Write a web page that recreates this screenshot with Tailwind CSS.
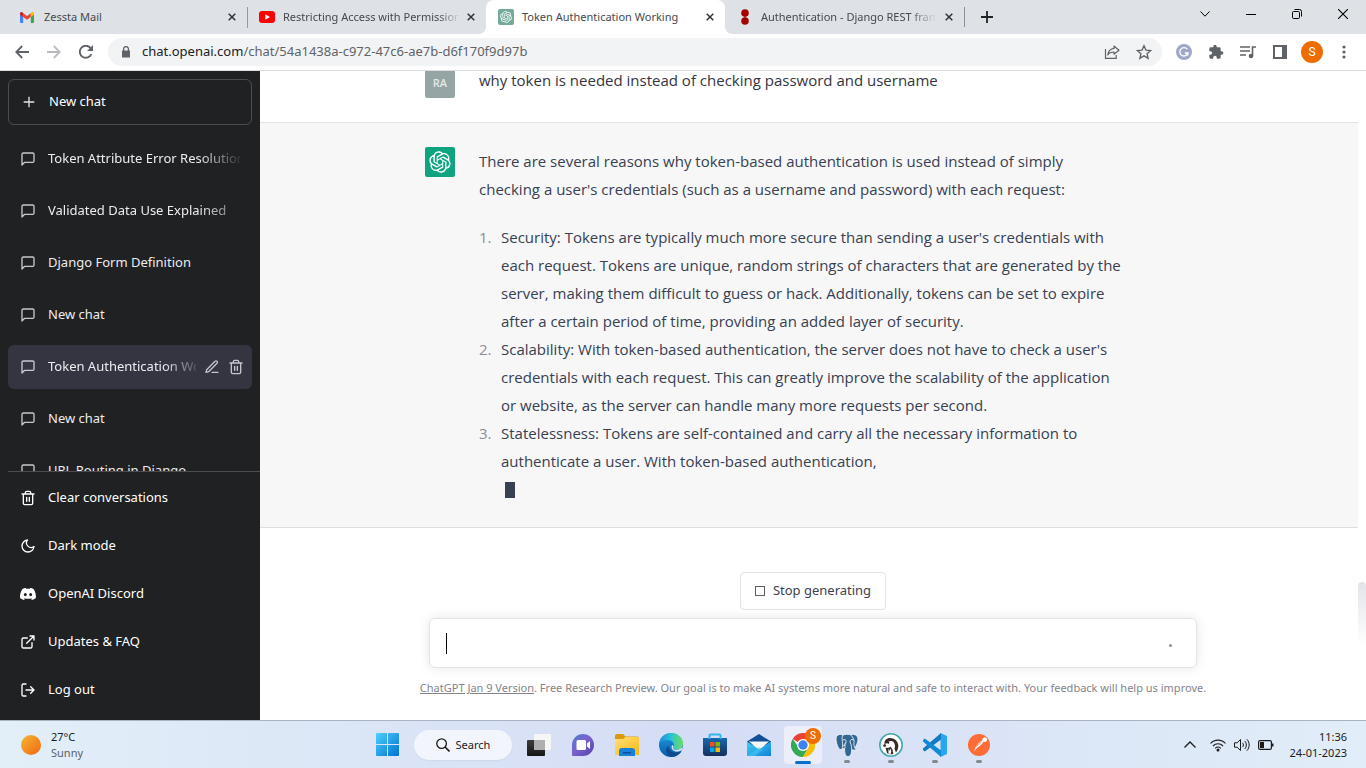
<!DOCTYPE html>
<html lang="en">
<head>
<meta charset="utf-8">
<title>Token Authentication Working</title>
<script src="https://cdn.jsdelivr.net/npm/@tailwindcss/browser@4"></script>
</head>
<body class="flex h-screen flex-col overflow-hidden bg-white font-['Noto_Sans',sans-serif] text-[13px]">
<svg class="absolute size-0" aria-hidden="true">
  <defs>
    <symbol id="openai" viewBox="0 0 41 41"><path fill="currentColor" d="M37.5324 16.8707C37.9808 15.5241 38.1363 14.0974 37.9886 12.6859C37.8409 11.2744 37.3934 9.91076 36.676 8.68622C35.6126 6.83404 33.9882 5.3676 32.0373 4.4985C30.0864 3.62941 27.9098 3.40259 25.8215 3.85078C24.8796 2.7893 23.7219 1.94125 22.4257 1.36341C21.1295 0.785575 19.7249 0.491269 18.3058 0.500197C16.1708 0.495044 14.0893 1.16803 12.3614 2.42214C10.6335 3.67624 9.34853 5.44666 8.6917 7.47815C7.30085 7.76286 5.98686 8.3414 4.8377 9.17505C3.68854 10.0087 2.73073 11.0782 2.02839 12.312C0.956464 14.1591 0.498905 16.2988 0.721698 18.4228C0.944492 20.5467 1.83612 22.5449 3.268 24.1293C2.81966 25.4759 2.66413 26.9026 2.81182 28.3141C2.95951 29.7256 3.40701 31.0892 4.12437 32.3138C5.18791 34.1659 6.8123 35.6322 8.76321 36.5013C10.7141 37.3704 12.8907 37.5973 14.9789 37.1492C15.9208 38.2107 17.0786 39.0587 18.3747 39.6366C19.6709 40.2144 21.0755 40.5087 22.4946 40.4998C24.6307 40.5054 26.7133 39.8321 28.4418 38.5772C30.1704 37.3223 31.4556 35.5506 32.1119 33.5179C33.5027 33.2332 34.8167 32.6547 35.9659 31.821C37.115 30.9874 38.0728 29.9178 38.7752 28.684C39.8458 26.8371 40.3023 24.6979 40.0789 22.5748C39.8556 20.4517 38.9639 18.4544 37.5324 16.8707ZM22.4978 37.8849C20.7443 37.8874 19.0459 37.2733 17.6994 36.1501C17.7601 36.117 17.8666 36.0586 17.936 36.0161L25.9004 31.4156C26.1003 31.3019 26.2663 31.137 26.3813 30.9378C26.4964 30.7386 26.5563 30.5124 26.5549 30.2825V19.0542L29.9213 20.998C29.9389 21.0068 29.9541 21.0198 29.9656 21.0359C29.977 21.052 29.9842 21.0707 29.9867 21.0902V30.3889C29.9842 32.375 29.1946 34.2791 27.7909 35.6841C26.3872 37.0892 24.4838 37.8806 22.4978 37.8849ZM6.39227 31.0064C5.51397 29.4888 5.19742 27.7107 5.49804 25.9832C5.55718 26.0187 5.66048 26.0818 5.73461 26.1244L13.699 30.7248C13.8975 30.8408 14.1233 30.902 14.3532 30.902C14.583 30.902 14.8088 30.8408 15.0073 30.7248L24.731 25.1103V28.9979C24.7321 29.0177 24.7283 29.0376 24.7199 29.0556C24.7115 29.0736 24.6988 29.0893 24.6829 29.1012L16.6317 33.7497C14.9096 34.7416 12.8643 35.0097 10.9447 34.4954C9.02506 33.9811 7.38785 32.7263 6.39227 31.0064ZM4.29707 13.6194C5.17156 12.0998 6.55279 10.9364 8.19885 10.3327C8.19885 10.4013 8.19491 10.5228 8.19491 10.6071V19.808C8.19351 20.0378 8.25334 20.2638 8.36823 20.4629C8.48312 20.6619 8.64893 20.8267 8.84863 20.9404L18.5723 26.5542L15.206 28.4979C15.1894 28.5089 15.1703 28.5155 15.1505 28.5173C15.1307 28.5191 15.1107 28.516 15.0924 28.5082L7.04046 23.8557C5.32135 22.8601 4.06716 21.2235 3.55289 19.3046C3.03862 17.3858 3.30624 15.3413 4.29707 13.6194ZM31.955 20.0556L22.2312 14.4411L25.5976 12.4981C25.6142 12.4872 25.6333 12.4805 25.6531 12.4787C25.6729 12.4769 25.6928 12.4801 25.7111 12.4879L33.7631 17.1364C34.9967 17.849 36.0017 18.8982 36.6606 20.1613C37.3194 21.4244 37.6047 22.849 37.4832 24.2684C37.3617 25.6878 36.8382 27.0432 35.9743 28.1759C35.1103 29.3086 33.9415 30.1717 32.6047 30.6641C32.6047 30.5947 32.6047 30.4733 32.6047 30.3889V21.188C32.6066 20.9586 32.5474 20.7328 32.4332 20.5338C32.319 20.3348 32.154 20.1698 31.955 20.0556ZM35.3055 15.0128C35.2464 14.9765 35.1431 14.9142 35.069 14.8717L27.1045 10.2712C26.906 10.1554 26.6803 10.0943 26.4504 10.0943C26.2206 10.0943 25.9948 10.1554 25.7963 10.2712L16.0726 15.8858V11.9982C16.0715 11.9783 16.0753 11.9585 16.0837 11.9405C16.0921 11.9225 16.1048 11.9068 16.1207 11.8949L24.1719 7.25025C25.4053 6.53903 26.8158 6.19376 28.2383 6.25482C29.6608 6.31589 31.0364 6.78077 32.2044 7.59508C33.3723 8.40939 34.2842 9.53945 34.8334 10.8531C35.3826 12.1667 35.5464 13.6095 35.3055 15.0128ZM14.2424 21.9419L10.8752 19.9981C10.8576 19.9893 10.8423 19.9763 10.8309 19.9602C10.8195 19.9441 10.8122 19.9254 10.8098 19.9058V10.6071C10.8107 9.18295 11.2173 7.78848 11.9819 6.58696C12.7466 5.38544 13.8377 4.42659 15.1275 3.82264C16.4173 3.21869 17.8524 2.99464 19.2649 3.1767C20.6775 3.35876 22.0089 3.93941 23.1034 4.85067C23.0427 4.88379 22.937 4.94215 22.8668 4.98473L14.9024 9.58517C14.7025 9.69878 14.5366 9.86356 14.4215 10.0626C14.3065 10.2616 14.2466 10.4877 14.2479 10.7175L14.2424 21.9419ZM16.071 17.9991L20.4018 15.4978L24.7325 17.9975V22.9985L20.4018 25.4983L16.071 22.9985V17.9991Z"/></symbol>
    <symbol id="x" viewBox="0 0 8 8"><path d="M.7.7l6.600 6.600M7.300.7L.7 7.300" stroke="currentColor" stroke-width="1.500" fill="none"/></symbol>
    <symbol id="chat" viewBox="0 0 24 24"><path d="M21 15a2 2 0 0 1-2 2H7l-4 4V5a2 2 0 0 1 2-2h14a2 2 0 0 1 2 2z" fill="none" stroke="currentColor" stroke-width="2" stroke-linecap="round" stroke-linejoin="round"/></symbol>
    <symbol id="trash" viewBox="0 0 24 24"><path d="M3 6h18M19 6v14a2 2 0 0 1-2 2H7a2 2 0 0 1-2-2V6m3 0V4a2 2 0 0 1 2-2h4a2 2 0 0 1 2 2v2M10 11v6M14 11v6" fill="none" stroke="currentColor" stroke-width="2" stroke-linecap="round" stroke-linejoin="round"/></symbol>
    <linearGradient id="win" x1="0" y1="0" x2="1" y2="1"><stop offset="0" stop-color="#4fd0fb"/><stop offset="1" stop-color="#0072d2"/></linearGradient>
    <linearGradient id="dark" x1="0" y1="0" x2="0" y2="1"><stop offset="0" stop-color="#3c3c3c"/><stop offset="1" stop-color="#161616"/></linearGradient>
    <linearGradient id="teams" x1="0" y1="0" x2="1" y2="1"><stop offset="0" stop-color="#4f7fd0"/><stop offset=".45" stop-color="#7a62cc"/><stop offset="1" stop-color="#5243a8"/></linearGradient>
    <linearGradient id="folder" x1="0" y1="0" x2="1" y2="1"><stop offset="0" stop-color="#ffe07a"/><stop offset="1" stop-color="#fbb811"/></linearGradient>
    <linearGradient id="edgeA" x1="0" y1="0" x2="1" y2="0"><stop offset="0" stop-color="#1b8bdc"/><stop offset=".5" stop-color="#2bc3d6"/><stop offset="1" stop-color="#6be05a"/></linearGradient>
    <linearGradient id="edgeB" x1="0" y1="0" x2="0" y2="1"><stop offset="0" stop-color="#1a9ee6"/><stop offset="1" stop-color="#0c59a4"/></linearGradient>
    <linearGradient id="store" x1="0" y1="0" x2="0" y2="1"><stop offset="0" stop-color="#1668b0"/><stop offset="1" stop-color="#162f5c"/></linearGradient>
    <linearGradient id="mail" x1="0" y1="0" x2="1" y2="1"><stop offset="0" stop-color="#3fd0f5"/><stop offset="1" stop-color="#1380d8"/></linearGradient>
  </defs>
</svg>

<!-- Tab strip -->
<header class="flex h-[34px] shrink-0 justify-between bg-[#dee1e6] text-[#45494d]">
  <div class="flex min-w-0 pl-2 text-[11px]" role="tablist">
    <div role="tab" class="flex w-[239px] items-center pr-[11px] pl-3">
      <svg class="mr-2.5 h-[11px] w-[14px] shrink-0" viewBox="0 0 14 11"><path fill="#4285f4" d="M0 2v8a1 1 0 0 0 1 1h2.200V4.500z"/><path fill="#34a853" d="M14 2v8a1 1 0 0 1-1 1h-2.200V4.500z"/><path fill="#ea4335" d="M3.200 1.200L7 4l3.800-2.800v3.800L7 7.800 3.200 5z"/><path fill="#c5221f" d="M0 1.600C0 .2 1.500-.3 2.500.5l.7.7V5L0 2.700z"/><path fill="#fbbc04" d="M14 1.600c0-1.400-1.500-1.900-2.500-1.100l-.7.7V5L14 2.700z"/></svg>
      <span class="flex-1 truncate">Zessta Mail</span>
      <button aria-label="Close tab"><svg class="size-2 text-[#303336]"><use href="#x"/></svg></button>
    </div>
    <div role="tab" class="flex w-[239px] items-center border-l border-[#a4a7ab] pr-[11px] pl-[11px] [border-image:linear-gradient(to_bottom,transparent_8px,#96999d_8px,#96999d_27px,transparent_27px)_1]">
      <svg class="mr-2 h-[12px] w-4 shrink-0" viewBox="0 0 16 12"><rect width="16" height="12" rx="3" fill="#f00"/><path d="M6.300 3.300v5.400L11 6z" fill="#fff"/></svg>
      <span class="min-w-0 flex-1 overflow-hidden whitespace-nowrap [mask-image:linear-gradient(to_right,#000_155px,transparent_177px)]">Restricting Access with Permissions</span>
      <button class="ml-2" aria-label="Close tab"><svg class="size-2 text-[#303336]"><use href="#x"/></svg></button>
    </div>
    <div role="tab" aria-selected="true" class="relative flex w-[239px] items-center rounded-t-lg bg-white pr-[11px] pl-3">
      <span class="absolute bottom-0 -left-2 size-2 bg-[radial-gradient(circle_at_0_0,transparent_8px,white_8px)]"></span>
      <span class="absolute -right-2 bottom-0 size-2 bg-[radial-gradient(circle_at_100%_0,transparent_8px,white_8px)]"></span>
      <span class="mr-2 flex size-4 shrink-0 items-center justify-center rounded-xs bg-[#74aa9c] text-white"><svg class="size-3"><use href="#openai"/></svg></span>
      <span class="flex-1 truncate">Token Authentication Working</span>
      <button aria-label="Close tab"><svg class="size-2 text-[#303336]"><use href="#x"/></svg></button>
    </div>
    <div role="tab" class="flex w-[239px] items-center pr-[11px] pl-3">
      <svg class="mr-2 size-4 shrink-0" viewBox="0 0 16 16"><path d="M7 4h2v8H7z" fill="#cf6a6a"/><circle cx="8" cy="4" r="3.800" fill="#a30000"/><circle cx="8" cy="12" r="3.800" fill="#a30000"/></svg>
      <span class="min-w-0 flex-1 overflow-hidden whitespace-nowrap [mask-image:linear-gradient(to_right,#000_148px,transparent_175px)]">Authentication - Django REST framework</span>
      <button class="ml-2" aria-label="Close tab"><svg class="size-2 text-[#303336]"><use href="#x"/></svg></button>
    </div>
    <div class="flex items-center"><span class="h-5 w-px bg-[#8f9296]"></span>
      <button class="ml-4" aria-label="New tab"><svg class="size-3 text-[#202326]" viewBox="0 0 12 12"><path d="M6 0v12M0 6h12" stroke="currentColor" stroke-width="1.800"/></svg></button></div>
  </div>
  <div class="flex h-7 text-black">
    <button class="flex w-[46px] items-center justify-center" aria-label="Search tabs"><svg class="h-1.5 w-2.5" viewBox="0 0 10 6"><path d="M.5.5L5 5.200 9.500.5" fill="none" stroke="currentColor"/></svg></button>
    <button class="flex w-[46px] items-center justify-center" aria-label="Minimise"><svg class="h-px w-2.5"><rect width="10" height="1"/></svg></button>
    <button class="flex w-[46px] items-center justify-center" aria-label="Restore"><svg class="size-2.5" viewBox="0 0 10 10"><rect x=".5" y="2.500" width="7" height="7" rx="1.200" fill="none" stroke="currentColor"/><path d="M2.500.5H7.500a2 2 0 0 1 2 2v5" fill="none" stroke="currentColor"/></svg></button>
    <button class="flex w-[46px] items-center justify-center" aria-label="Close"><svg class="size-2.5" viewBox="0 0 10 10"><path d="M0 0l10 10M10 0L0 10" stroke="currentColor" stroke-width="1.100"/></svg></button>
  </div>
</header>

<!-- Address bar -->
<nav class="flex h-[37px] shrink-0 items-center gap-1.5 border-b border-[#dadce0] bg-white px-1.5 text-[#5f6368]">
  <div class="flex">
    <button class="flex w-8 justify-center" aria-label="Back"><svg class="size-3.5" viewBox="0 0 14 14"><path d="M14 7H1.500M7.200 1L1.300 7l5.900 6" fill="none" stroke="currentColor" stroke-width="1.800"/></svg></button>
    <button class="flex w-8 justify-center text-[#b9bbbe]" aria-label="Forward"><svg class="size-3.5" viewBox="0 0 14 14"><path d="M0 7h12.500M6.800 1l5.900 6-5.900 6" fill="none" stroke="currentColor" stroke-width="1.800"/></svg></button>
    <button class="flex w-8 justify-center" aria-label="Reload"><svg class="size-3.5" viewBox="0 0 14 14"><path d="M12.400 9A6 6 0 1 1 11.300 2.800L12.600 4.200" fill="none" stroke="currentColor" stroke-width="1.900"/><path d="M14 0v6H8z" fill="currentColor"/></svg></button>
  </div>
  <div class="flex h-7 min-w-0 flex-1 items-center rounded-full bg-[#f1f3f4] pr-0.5 pl-3.5">
    <svg class="mr-3 h-3 w-2 shrink-0" viewBox="0 0 8 12"><path d="M0 4.500h8V11.500H0z" fill="currentColor"/><path d="M1.600 5V3a2.400 2.400 0 0 1 4.800 0v2" fill="none" stroke="currentColor" stroke-width="1.300"/></svg>
    <a href="#" class="flex-1 truncate"><span class="text-[#202124]">chat.openai.com</span>/chat/54a1438a-c972-47c6-ae7b-d6f170f9d97b</a>
    <button class="flex w-8 justify-center" aria-label="Share"><svg class="h-3.5 w-4" viewBox="0 0 16 14"><path d="M1.500 4v9.300h10.700V10" fill="none" stroke="currentColor" stroke-width="1.200"/><path d="M10 1l5 4.200-5 4V7C7 7 5 8 3.800 10 4.200 6.500 6.500 3.800 10 3.400z" fill="none" stroke="currentColor" stroke-width="1.200" stroke-linejoin="round"/></svg></button>
    <button class="flex w-8 justify-center" aria-label="Bookmark"><svg class="size-4" viewBox="0 0 24 24"><path d="M12 2.500l2.900 6.600 7.100.7-5.400 4.700 1.600 7-6.200-3.700-6.200 3.700 1.600-7L2 9.800l7.100-.7z" fill="none" stroke="currentColor" stroke-width="2"/></svg></button>
  </div>
  <div class="flex items-center">
    <button class="flex w-8 justify-center" aria-label="Grammarly"><svg class="size-4" viewBox="0 0 16 16"><circle cx="8" cy="8" r="8" fill="#a0a7c8"/><path d="M11.300 5.200A4.200 4.200 0 1 0 12 9H8.800M12 9l-.4 2.600" fill="none" stroke="#fff" stroke-width="1.300"/></svg></button>
    <button class="flex w-8 justify-center" aria-label="Extensions"><svg class="size-4" viewBox="0 0 24 24"><path fill="currentColor" d="M20.500 11H19V7a2 2 0 0 0-2-2h-4V3.500a2.500 2.500 0 0 0-5 0V5H4a2 2 0 0 0-2 2v3.800h1.500a2.700 2.700 0 0 1 0 5.400H2V20a2 2 0 0 0 2 2h3.800v-1.500a2.700 2.700 0 0 1 5.400 0V22H17a2 2 0 0 0 2-2v-4h1.500a2.500 2.500 0 0 0 0-5z"/></svg></button>
    <button class="flex w-8 justify-center" aria-label="Media controls"><svg class="h-3.5 w-4" viewBox="0 0 16 14"><path d="M0 2h10M0 6h10M0 10h6M12.500 11V2H16" fill="none" stroke="currentColor" stroke-width="1.600"/><circle cx="11" cy="11" r="2.300" fill="currentColor"/></svg></button>
    <button class="flex w-8 justify-center" aria-label="Side panel"><svg class="size-3.5" viewBox="0 0 14 14"><path d="M1 1h12v12H1z" fill="none" stroke="currentColor" stroke-width="2"/><path d="M9 0h5v14H9z" fill="currentColor"/></svg></button>
    <button class="flex w-8 justify-center" aria-label="Profile"><span class="flex size-[22px] items-center justify-center rounded-full bg-[#ef6c00] font-['Roboto'] text-[12px] text-white">S</span></button>
    <button class="flex w-8 justify-center" aria-label="Menu"><svg class="h-3.5 w-1" viewBox="0 0 4 14"><circle cx="2" cy="2" r="1.600" fill="currentColor"/><circle cx="2" cy="7" r="1.600" fill="currentColor"/><circle cx="2" cy="12" r="1.600" fill="currentColor"/></svg></button>
  </div>
</nav>

<div class="flex min-h-0 flex-1">
  <!-- Sidebar -->
  <aside class="flex w-[260px] shrink-0 flex-col bg-[#202123] p-2 pr-0 text-white">
    <button class="mr-2 flex h-[46px] shrink-0 items-center gap-3 rounded-md border border-[#4d4d4f] px-3"><svg class="size-4" viewBox="0 0 24 24"><path d="M12 4v16M4 12h16" stroke="#e2e2e2" stroke-width="2"/></svg>New chat</button>
    <div class="mt-3 flex min-h-0 flex-1 flex-col gap-2 overflow-hidden border-b border-[#4d4d4f] pr-2 text-[#ececf1]">
      <a href="#" class="flex h-11 shrink-0 items-center gap-3 rounded-md px-3"><svg class="size-4 shrink-0 text-[#c9c9cd]"><use href="#chat"/></svg><span class="flex-1 overflow-hidden whitespace-nowrap [mask-image:linear-gradient(to_right,#000_150px,transparent_196px)]">Token Attribute Error Resolution</span></a>
      <a href="#" class="flex h-11 shrink-0 items-center gap-3 rounded-md px-3"><svg class="size-4 shrink-0 text-[#c9c9cd]"><use href="#chat"/></svg><span class="flex-1 overflow-hidden whitespace-nowrap [mask-image:linear-gradient(to_right,#000_150px,transparent_210px)]">Validated Data Use Explained</span></a>
      <a href="#" class="flex h-11 shrink-0 items-center gap-3 rounded-md px-3"><svg class="size-4 shrink-0 text-[#c9c9cd]"><use href="#chat"/></svg>Django Form Definition</a>
      <a href="#" class="flex h-11 shrink-0 items-center gap-3 rounded-md px-3"><svg class="size-4 shrink-0 text-[#c9c9cd]"><use href="#chat"/></svg>New chat</a>
      <div class="flex h-11 shrink-0 items-center rounded-md bg-[#343541] pr-2 pl-3">
        <a href="#" class="flex min-w-0 flex-1 items-center gap-3"><svg class="size-4 shrink-0 text-[#c9c9cd]"><use href="#chat"/></svg><span class="flex-1 overflow-hidden whitespace-nowrap [mask-image:linear-gradient(to_right,#000_115px,transparent_155px)]">Token Authentication Working</span></a>
        <button class="ml-2 text-[#c5c5d2]" aria-label="Rename"><svg class="size-4" viewBox="0 0 24 24"><path d="M12 20h9M16.500 3.500a2.100 2.100 0 0 1 3 3L7 19l-4 1 1-4z" fill="none" stroke="currentColor" stroke-width="2" stroke-linecap="round" stroke-linejoin="round"/></svg></button>
        <button class="ml-2 text-[#c5c5d2]" aria-label="Delete"><svg class="size-4"><use href="#trash"/></svg></button>
      </div>
      <a href="#" class="flex h-11 shrink-0 items-center gap-3 rounded-md px-3"><svg class="size-4 shrink-0 text-[#c9c9cd]"><use href="#chat"/></svg>New chat</a>
      <a href="#" class="flex h-11 shrink-0 items-center gap-3 rounded-md px-3"><svg class="size-4 shrink-0 text-[#c9c9cd]"><use href="#chat"/></svg>URL Routing in Django</a>
    </div>
    <div class="flex flex-col gap-1 pt-1">
      <button class="flex h-11 items-center gap-3 px-3"><svg class="size-4"><use href="#trash"/></svg>Clear conversations</button>
      <button class="flex h-11 items-center gap-3 px-3"><svg class="size-4" viewBox="0 0 24 24"><path d="M21 12.800A9 9 0 1 1 11.200 3 7 7 0 0 0 21 12.800z" fill="none" stroke="currentColor" stroke-width="2" stroke-linejoin="round"/></svg>Dark mode</button>
      <a href="#" class="flex h-11 items-center gap-3 px-3"><svg class="size-4" viewBox="0 0 24 24"><path fill="currentColor" fill-rule="evenodd" d="M20.300 4.400A19.800 19.800 0 0 0 15.400 3l-.6 1.200a18.300 18.300 0 0 0-5.600 0L8.600 3a19.700 19.700 0 0 0-4.900 1.400C.5 9-.3 13.600.1 18.100a19.900 19.900 0 0 0 6 3l1.300-2-1.900-.9.400-.3c3.900 1.800 8.200 1.800 12.100 0l.4.300-1.900.9 1.300 2a19.800 19.800 0 0 0 6-3c.5-5.200-.8-9.700-3.500-13.700zM8 15.300c-1.200 0-2.200-1.100-2.200-2.400S6.800 10.500 8 10.500s2.200 1.100 2.200 2.400S9.200 15.300 8 15.300zm8 0c-1.200 0-2.200-1.100-2.200-2.400s1-2.400 2.200-2.400 2.200 1.100 2.200 2.400-1 2.400-2.200 2.400z"/></svg>OpenAI Discord</a>
      <a href="#" class="flex h-11 items-center gap-3 px-3"><svg class="size-4" viewBox="0 0 24 24"><path d="M18 13v6a2 2 0 0 1-2 2H5a2 2 0 0 1-2-2V8a2 2 0 0 1 2-2h6M15 3h6v6M10 14L21 3" fill="none" stroke="currentColor" stroke-width="2" stroke-linecap="round" stroke-linejoin="round"/></svg>Updates &amp; FAQ</a>
      <button class="flex h-11 items-center gap-3 px-3"><svg class="size-4" viewBox="0 0 24 24"><path d="M9 21H5a2 2 0 0 1-2-2V5a2 2 0 0 1 2-2h4M16 17l5-5-5-5M21 12H9" fill="none" stroke="currentColor" stroke-width="2" stroke-linecap="round" stroke-linejoin="round"/></svg>Log out</button>
    </div>
  </aside>

  <!-- Conversation -->
  <main class="relative flex min-w-0 flex-1 flex-col justify-between">
    <div class="mr-2 font-['Open_Sans',sans-serif] text-[15px] leading-7 text-[#374151]">
      <section class="flex h-[52px] items-end justify-center overflow-hidden border-b border-[#e3e3e3] pb-6 text-[#343541]">
        <div class="flex h-8 w-full max-w-3xl gap-6">
          <div class="flex size-[30px] shrink-0 items-center justify-center self-end rounded-xs bg-[#95a5a6] text-[11px] font-semibold text-[#e3e8e8]">RA</div>
          <p>why token is needed instead of checking password and username</p>
        </div>
      </section>
      <section class="flex justify-center border-b border-[#dedede] bg-[#f7f7f8] py-6">
        <div class="flex w-full max-w-3xl gap-6">
          <div class="flex size-[30px] shrink-0 items-center justify-center rounded-xs bg-[#10a37f] text-white"><svg class="size-[22px]"><use href="#openai"/></svg></div>
          <div class="max-w-[645px]">
            <p class="mb-5">There are several reasons why token-based authentication is used instead of simply checking a user's credentials (such as a username and password) with each request:</p>
            <ol>
              <li class="flex [counter-increment:item] before:w-[22px] before:shrink-0 before:text-[#8a8d95] before:content-[counter(item)_'.']"><div>Security: Tokens are typically much more secure than sending a user's credentials with each request. Tokens are unique, random strings of characters that are generated by the server, making them difficult to guess or hack. Additionally, tokens can be set to expire after a certain period of time, providing an added layer of security.</div></li>
              <li class="flex [counter-increment:item] before:w-[22px] before:shrink-0 before:text-[#8a8d95] before:content-[counter(item)_'.']"><div>Scalability: With token-based authentication, the server does not have to check a user's credentials with each request. This can greatly improve the scalability of the application or website, as the server can handle many more requests per second.</div></li>
              <li class="flex [counter-increment:item] before:w-[22px] before:shrink-0 before:text-[#8a8d95] before:content-[counter(item)_'.']"><div>Statelessness: Tokens are self-contained and carry all the necessary information to authenticate a user. With token-based authentication,
                <div class="flex h-7 items-center pt-0.5 pl-1"><span class="h-4 w-2.5 bg-[#374151]"></span></div></div></li>
            </ol>
          </div>
        </div>
      </section>
    </div>
    <div class="absolute top-[511px] right-0 h-16 w-2 rounded-t-full bg-linear-to-b from-[#e3e4ea] to-white"></div>

    <form class="flex flex-col items-center px-6 pb-6">
      <button type="button" class="mb-2 flex h-[38px] w-[146px] items-center justify-center gap-2 rounded border border-[#e2e2e8] bg-white text-[#40414f]"><svg class="size-2.5" viewBox="0 0 10 10"><rect x=".5" y=".5" width="9" height="9" fill="none" stroke="#5d5f6c"/></svg>Stop generating</button>
      <div class="relative flex h-[50px] w-full max-w-3xl items-center rounded-md border border-[#e3e3e3] bg-white px-4 shadow-[0_0_12px_rgba(0,0,0,0.10)]">
        <label class="sr-only" for="prompt">Message</label>
        <textarea id="prompt" rows="1" class="h-6 flex-1 resize-none text-[15px] leading-6 outline-none"></textarea>
        <span class="absolute top-3.5 left-4 h-[21px] w-px bg-black"></span>
        <button type="button" class="mr-2 pt-1" aria-label="Generating"><span class="block size-[3px] rounded-full bg-[#8e8ea0]"></span></button>
      </div>
      <p class="pt-3 text-[11px] leading-4 text-[#83848c]"><a href="#" class="underline">ChatGPT Jan 9 Version</a>. Free Research Preview. Our goal is to make AI systems more natural and safe to interact with. Your feedback will help us improve.</p>
    </form>
  </main>
</div>

<!-- Taskbar -->
<footer class="grid h-12 shrink-0 grid-cols-[1fr_auto_1fr] border-t border-[#abb3c2] bg-linear-to-r from-[#e2eff8] via-[#d5ddf5] to-[#e1edf8] text-[11px] leading-4 text-[#1b1b1b]">
  <button class="flex items-center gap-2.5 pl-[21px] text-left"><span class="size-5 rounded-full bg-linear-to-br from-[#f2b632] to-[#f0640f]"></span><span>27°C<br><span class="text-[#5c6067]">Sunny</span></span></button>
  <div class="flex items-center">
    <button class="flex w-11 justify-center" aria-label="Start"><svg class="size-[23px]" viewBox="0 0 23 23"><path fill="url(#win)" d="M1 0h10v11H0V1a1 1 0 0 1 1-1zM12 0h10a1 1 0 0 1 1 1v10H12zM0 12h11v11H1a1 1 0 0 1-1-1zM12 12h11v10a1 1 0 0 1-1 1H12z"/></svg></button>
    <button class="mx-[5px] flex h-[30px] w-[98px] items-center justify-center gap-1.5 rounded-full bg-[#f3f5fc] shadow-xs"><svg class="size-3.5" viewBox="0 0 14 14"><circle cx="5.600" cy="5.600" r="4.800" fill="none" stroke="currentColor" stroke-width="1.300"/><path d="M9 9l4.500 4.500" stroke="currentColor" stroke-width="1.600"/></svg>Search</button>
    <button class="flex w-11 justify-center" aria-label="Task view"><svg class="size-6" viewBox="0 0 24 24"><path d="M7 1h16a1 1 0 0 1 1 1v14a1 1 0 0 1-1 1H7z" fill="#f6f6f6"/><rect y="7" width="18" height="16" rx="1" fill="url(#dark)"/><path d="M7 7h11v10H7z" fill="#aeb0b0"/></svg></button>
    <button class="flex w-11 justify-center" aria-label="Chat"><svg class="size-6" viewBox="0 0 24 24"><path d="M12 1a11 11 0 1 1 0 22H2a1 1 0 0 1-1-1V12A11 11 0 0 1 12 1z" fill="url(#teams)"/><rect x="5.500" y="7" width="9.500" height="10" rx="1.500" fill="#fff"/><path d="M16 10.500L19 8v8l-3-2.500z" fill="#fff"/></svg></button>
    <button class="flex w-11 justify-center" aria-label="File Explorer"><svg class="size-6" viewBox="0 0 24 24"><path d="M0 3a2 2 0 0 1 2-2h6l2.500 2.500H22a2 2 0 0 1 2 2V10H0z" fill="#d99a0b"/><path d="M0 6h8l2.500-2H23a1 1 0 0 1 1 1v17H0z" fill="url(#folder)"/><path d="M4 23v-5a3 3 0 0 1 3-3h10a3 3 0 0 1 3 3v5z" fill="#1681d6"/><path d="M8 19h8v1.500H8z" fill="#0a4f9c"/></svg></button>
    <button class="flex w-11 justify-center" aria-label="Edge"><svg class="size-6" viewBox="0 0 24 24"><circle cx="12" cy="12" r="12" fill="url(#edgeB)"/><path d="M0 11C1 4.500 6 0 12 0c7 0 12 5 12 10.300 0 4-3 6.400-6.500 6.400-3 0-4-1.200-3-2.700C16 11.500 14 7 8.500 7 4.500 7 1.500 8.500 0 11z" fill="url(#edgeA)"/><path d="M9.500 12.500c-.5 5 4.500 8 9 7 2-.4 3.300-1.200 4-1.200C20 22.300 16 24 12.500 24c-5-1.500-7.500-7.500-3-11.500z" fill="#0d4a8e"/><path d="M22.800 17.300c-3.500 2.200-8 1.800-9.800-1.300-.8-1.400-.6-3 .6-4 1 1.100 1.100 1.500.7 2.500-.6 1.600.7 2.300 3.200 2.300 2.500 0 5-1.200 6-3.500z" fill="#d6dff5"/></svg></button>
    <button class="flex w-11 justify-center" aria-label="Microsoft Store"><svg class="size-6" viewBox="0 0 24 24"><path d="M0 5h24v15a3 3 0 0 1-3 3H3a3 3 0 0 1-3-3z" fill="url(#store)"/><path d="M6.500 6V2.500a1 1 0 0 1 1-1h9a1 1 0 0 1 1 1V6" fill="none" stroke="#2fb5ee" stroke-width="2"/><path d="M7 9h4.500v4.500H7z" fill="#f25022"/><path d="M12.500 9H17v4.500h-4.500z" fill="#7fba00"/><path d="M7 14.500h4.500V19H7z" fill="#00a4ef"/><path d="M12.500 14.500H17V19h-4.500z" fill="#ffb900"/></svg></button>
    <button class="flex w-11 justify-center" aria-label="Mail"><svg class="size-6" viewBox="0 0 24 24"><path d="M0 8.500L12 1l12 7.500v4H0z" fill="#134f97"/><path d="M2 8.500h20L12 17z" fill="#f5f9fd"/><path d="M0 8.500l12 8 12-8V23H0z" fill="url(#mail)"/><path d="M0 23l12-9 4 2.500L8 23z" fill="#48c9f3" fill-opacity=".55"/></svg></button>
    <div class="relative flex w-11 justify-center">
      <button class="relative flex h-[38px] w-[38px] items-center justify-center rounded bg-[#eceffa]" aria-label="Chrome"><svg class="size-6" viewBox="0 0 24 24"><path d="M12 12L1.600 6A12 12 0 0 1 22.400 6z" fill="#ea4335"/><path d="M12 12H6L1.600 6A12 12 0 0 0 12 24l5.200-9z" fill="#34a853"/><path d="M12 12l5.200 3L12 24A12 12 0 0 0 22.400 6H12z" fill="#fbbc04"/><circle cx="12" cy="12" r="6" fill="#fff"/><circle cx="12" cy="12" r="4.700" fill="#3c82f0"/></svg></button>
      <span class="absolute top-0.5 right-1 flex size-4 items-center justify-center rounded-full bg-[#ef6c00] font-['Roboto'] text-[10px] text-white">S</span>
      <span class="absolute bottom-0 h-[3px] w-4 rounded-full bg-[#0a6fcc]"></span>
    </div>
    <div class="relative flex w-11 justify-center"><button aria-label="pgAdmin"><svg class="size-6" viewBox="0 0 24 24"><path d="M8 2C4.500.5 1 2 1 6c0 3.500 2 9.500 4 10.500 1.200.4 2-.8 3-1.700 0 .8.8 1.200 1.500 1.200.3 3 .2 7 3 7.500 3 .3 4-2 4.200-7 .8 1 4.500.8 6-.7-1.500 0-2.800-.1-3-.7 3-4 4.300-10 2.300-12C20 1 17.500 1 15.500 1.700 13 1 10.500 1 8 2z" fill="#336791" stroke="#eef3f8" stroke-width=".9"/><path d="M8 2C6 5 8 8 7.500 14.500M9.500 16c.8-2 .5-3.500.3-5.500M15.500 1.700c3 3 4 6 3.500 8-.8 2 .8 3 .3 5M16.700 16.500c-.5-2 .3-4-1.400-6.500-.8-3 1-4 3.600-3.200M8 7c1.300-.8 3-.4 3.100 1.200-.1 2.500-1.500 4.800-3.500 4.800" fill="none" stroke="#e8f0f8" stroke-width=".9"/></svg></button><span class="absolute -bottom-1.5 h-[3px] w-1.5 rounded-full bg-[#85898f]"></span></div>
    <div class="relative flex w-11 justify-center"><button aria-label="DBeaver"><svg class="size-6" viewBox="0 0 24 24"><circle cx="12" cy="12" r="11.200" fill="#fff" stroke="#46a8ad" stroke-width="1.600"/><path d="M5.500 11C5 7 8 5 11 5c4.500 0 8 3 8.300 7.500.1 2.500-.8 5-2.300 7l-1.500-3.700c1-2.500.5-5.500-1.500-7.300-2-1-4.500-.5-5.300 1.500z" fill="#382924"/><path d="M4.200 12.500c.3-1.200 1.800-1.600 2.600-.8.600.8 0 1.800-.9 2-.9.100-1.900-.3-1.700-1.200z" fill="#2a1e1b"/><path d="M6.500 14.500c2 .8 4 .5 5-1l2 3 .8 4.500c-2.500.7-5 .2-6.300-1z" fill="#382924"/><path d="M9.300 15.500l1 2.500 1-2.800 1 3-.6 2.800-2.200-.3z" fill="#fff"/><circle cx="9.300" cy="9.800" r="1" fill="#2a1e1b"/></svg></button><span class="absolute -bottom-1.5 h-[3px] w-1.5 rounded-full bg-[#85898f]"></span></div>
    <div class="relative flex w-11 justify-center"><button aria-label="Visual Studio Code"><svg class="size-6" viewBox="0 0 24 24"><path d="M17.500 0L24 3v18l-6.500 3z" fill="#2aa5f0"/><path d="M18 6.500V0L0 15.500a1 1 0 0 0 0 1.500l1.800 1.500z" fill="#1478c4"/><path d="M18 17.500V24L0 8.500A1 1 0 0 1 0 7l1.800-1.500z" fill="#0f8ad8"/></svg></button><span class="absolute -bottom-1.5 h-[3px] w-1.5 rounded-full bg-[#85898f]"></span></div>
    <div class="relative flex w-11 justify-center"><button aria-label="Postman"><svg class="size-6" viewBox="0 0 24 24"><circle cx="12" cy="12" r="11" fill="#ff6c37"/><path d="M17.500 4.500a2.200 2.200 0 1 1-.8 4c-1.500 2.500-4 4.600-6.500 6.200L7 18.500l1.400-4C10 11.500 13 8.500 15.500 7.300a2.300 2.300 0 0 1 2-2.800z" fill="#fff"/><path d="M9.300 13.800l5-4.800M6 18.500h3" stroke="#ff6c37" stroke-width=".8"/></svg></button><span class="absolute -bottom-1.5 h-[3px] w-1.5 rounded-full bg-[#85898f]"></span></div>
  </div>
  <div class="flex items-center justify-end pr-[19px]">
    <button class="mr-3.5" aria-label="Hidden icons"><svg class="h-[7px] w-3" viewBox="0 0 12 7"><path d="M.5 6.500L6 1l5.500 5.500" fill="none" stroke="currentColor" stroke-width="1.300"/></svg></button>
    <svg class="mr-2 size-4" viewBox="0 0 16 16"><path d="M.5 6.500c4-4.500 11-4.500 15 0M3 9c2.800-3 7.200-3 10 0M5.200 11.300c1.700-1.700 3.900-1.700 5.600 0" fill="none" stroke="currentColor" stroke-width="1.100"/><circle cx="8" cy="13" r="1.500" fill="currentColor"/></svg>
    <svg class="mr-2 size-4" viewBox="0 0 16 16"><path d="M.5 5.800h2.600L6.500 2.500v11L3.100 10.200H.5z" fill="none" stroke="currentColor"/><path d="M8.500 5.800c1.200 1.300 1.200 3.100 0 4.400M10.700 4c2.200 2.300 2.200 5.700 0 8M12.900 2.300c3 3.300 3 8.100 0 11.400" fill="none" stroke="currentColor"/></svg>
    <svg class="mr-4 h-[10px] w-4" viewBox="0 0 16 10"><rect x=".6" y=".6" width="12.800" height="8.800" rx="1.500" fill="none" stroke="currentColor" stroke-width="1.200"/><path d="M2 2h4v6H2zM14 3.500h1.500v3H14z" fill="currentColor"/></svg>
    <button class="text-right">11:36<br>24-01-2023</button>
  </div>
</footer>
</body>
</html>
